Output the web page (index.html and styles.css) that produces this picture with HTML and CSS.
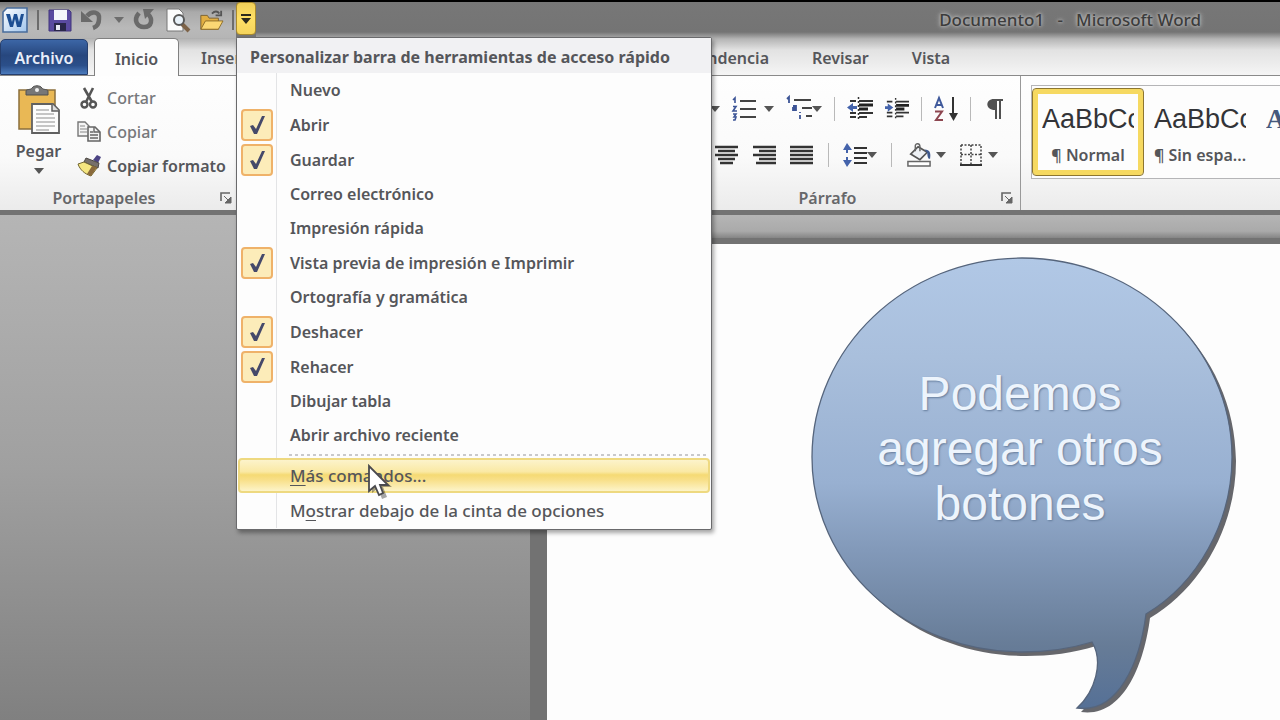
FILE: index.html
```html
<!DOCTYPE html>
<html lang="es">
<head>
<meta charset="utf-8">
<title>Documento1 - Microsoft Word</title>
<link rel="stylesheet" href="styles.css">
</head>
<body>
<header class="chrome">
  <div class="titlebar">
    <div class="quick">
      <svg class="logo" viewBox="0 0 26 26"><defs><linearGradient id="lg" x2="1" y2="1"><stop offset="0" stop-color="#fff"/><stop offset="1" stop-color="#9fc4ec"/></linearGradient></defs><path d="M5 1H25V25H1V5Z" fill="url(#lg)" stroke="#4a6d9c" stroke-width="1.6"/><path d="M4 7H8L10 15L12 7H15L17 15L19 7H22L19 20H15L13 12L11 20H8Z" fill="#1d4f93"/></svg>
      <span class="vsep"></span>
      <button class="qbtn" aria-label="Guardar"><svg viewBox="0 0 24 24"><path d="M1 2H21L23 4V23H1Z" fill="#5a4aa0" stroke="#41357c"/><path d="M6 2H19V12H6Z" fill="#f5f6fb"/><path d="M6 15H18V23H6Z" fill="#29264a"/><path d="M8 17h4v5H8z" fill="#e8e8f4"/></svg></button>
      <button class="qbtn" aria-label="Deshacer"><svg viewBox="0 0 24 24"><path d="M6 8C11 2 19 4 18 11C18 16 15 19 12 20" fill="none" stroke="#6a6a6a" stroke-width="4.500"/><path d="M0 3V14H12Z" fill="#6a6a6a"/></svg></button>
      <svg class="caret" viewBox="0 0 10 6"><path d="M0 0H10L5 6Z" fill="#6d6d6d"/></svg>
      <button class="qbtn" aria-label="Rehacer"><svg viewBox="0 0 24 24"><path d="M6 5C0 12 4 19 11 19C19 19 20 11 15 6" fill="none" stroke="#6a6a6a" stroke-width="4.500"/><path d="M10 1H21L12 11Z" fill="#6a6a6a"/></svg></button>
      <button class="qbtn" aria-label="Vista previa"><svg viewBox="0 0 24 24"><path d="M1 1H13L17 5V23H1Z" fill="#fbfbfb" stroke="#777"/><path d="M16 16L23 23" stroke="#7d6348" stroke-width="4"/><circle cx="13" cy="12" r="5" fill="#e8f1f8" stroke="#585858" stroke-width="2"/></svg></button>
      <button class="qbtn" aria-label="Abrir"><svg viewBox="0 0 26 24"><path d="M2 7H9L11 10H21V22H2Z" fill="#e1ae42" stroke="#7a602c"/><path d="M7 13H26L21 22H2Z" fill="#fbd774" stroke="#8b6a28"/><path d="M14 5C17 2 20 2 22 5M24 2V7H18" fill="none" stroke="#555" stroke-width="2"/></svg></button>
      <span class="vsep"></span>
      <div class="drop">
        <button class="drop-btn" aria-label="Personalizar" aria-expanded="true"><svg viewBox="0 0 12 10"><path d="M1 0H11V2H1ZM1 4H11L6 10Z" fill="#2c2a1c"/></svg></button>
        <div class="menu">
          <h2 class="menu-title">Personalizar barra de herramientas de acceso rápido</h2>
          <div class="menu-list">
            <label class="item"><span class="tick"><input type="checkbox"></span>Nuevo</label>
            <label class="item on"><span class="tick"><input type="checkbox" checked><svg viewBox="0 0 20 20"><path d="M3 11L6 10L9 14L15 1L18 1L10 19H7Z"/></svg></span>Abrir</label>
            <label class="item on"><span class="tick"><input type="checkbox" checked><svg viewBox="0 0 20 20"><path d="M3 11L6 10L9 14L15 1L18 1L10 19H7Z"/></svg></span>Guardar</label>
            <label class="item"><span class="tick"><input type="checkbox"></span>Correo electrónico</label>
            <label class="item"><span class="tick"><input type="checkbox"></span>Impresión rápida</label>
            <label class="item on"><span class="tick"><input type="checkbox" checked><svg viewBox="0 0 20 20"><path d="M3 11L6 10L9 14L15 1L18 1L10 19H7Z"/></svg></span>Vista previa de impresión e Imprimir</label>
            <label class="item"><span class="tick"><input type="checkbox"></span>Ortografía y gramática</label>
            <label class="item on"><span class="tick"><input type="checkbox" checked><svg viewBox="0 0 20 20"><path d="M3 11L6 10L9 14L15 1L18 1L10 19H7Z"/></svg></span>Deshacer</label>
            <label class="item on"><span class="tick"><input type="checkbox" checked><svg viewBox="0 0 20 20"><path d="M3 11L6 10L9 14L15 1L18 1L10 19H7Z"/></svg></span>Rehacer</label>
            <label class="item"><span class="tick"><input type="checkbox"></span>Dibujar tabla</label>
            <label class="item"><span class="tick"><input type="checkbox"></span>Abrir archivo reciente</label>
            <div class="menu-sep"></div>
            <button class="command hot"><u>M</u>ás comandos...</button>
            <button class="command">M<u>o</u>strar debajo de la cinta de opciones</button>
          </div>
          <svg class="cursor" viewBox="0 0 24 32"><path d="M4 3V27L10 22L14 33L19 31L15 21H24Z" fill="#000" opacity=".35"/><path d="M1 0V25L7 20L11 29L15 27L12 19H20Z" fill="#fff" stroke="#4a4a4e" stroke-width="1.800"/></svg>
        </div>
      </div>
    </div>
    <h1 class="doc-title">Documento1 &nbsp;&nbsp;-&nbsp;&nbsp; Microsoft Word</h1>
  </div>
  <nav class="tabs">
    <button class="tab file">Archivo</button>
    <button class="tab active">Inicio</button>
    <div class="tab-run">
      <button class="tab">Insertar</button>
      <button class="tab">Correspondencia</button>
    </div>
    <button class="tab">Revisar</button>
    <button class="tab">Vista</button>
  </nav>
</header>

<section class="ribbon">
  <div class="group clipboard">
    <div class="clip-body">
      <button class="paste">
        <svg class="paste-icon" viewBox="0 0 44 50"><path d="M2 5H38V44H2Z" fill="#e9b855" stroke="#8b6f3d" stroke-width="1.5"/><path d="M9 10V6C9 4 14 5 15 3C17 0 23 0 25 3C26 5 31 4 31 6V10Z" fill="#777" stroke="#505050"/><circle cx="20" cy="5" r="2" fill="#eee"/><path d="M15 19H36L42 25V48H15Z" fill="#fcfcfc" stroke="#606060" stroke-width="1.8"/><path d="M35 19V26H42" fill="#ddd" stroke="#606060" stroke-width="1.5"/><path d="M19 25H32M19 29H37M19 33H38M19 37H38M19 41H38M19 45H32" stroke="#b2b2b2" stroke-width="1.5"/></svg>
        <span>Pegar</span>
        <svg class="caret" viewBox="0 0 10 6"><path d="M0 0H10L5 6Z" fill="#555"/></svg>
      </button>
      <div class="clip-list">
        <button class="small dim"><svg viewBox="0 0 24 24"><path d="M7 2L15 16M16 2L9 16" stroke="#555" stroke-width="2.6"/><circle cx="7.500" cy="18.500" r="3" fill="none" stroke="#555" stroke-width="2.4"/><circle cx="16" cy="18.500" r="3" fill="none" stroke="#555" stroke-width="2.400"/></svg>Cortar</button>
        <button class="small dim"><svg viewBox="0 0 24 24"><path d="M1 2H8L12 6V16H1Z" fill="#f4f4f4" stroke="#777" stroke-width="1.4"/><path d="M3 6h5M3 9h7M3 12h7" stroke="#888"/><path d="M11 7H18L23 12V21H11Z" fill="#f4f4f4" stroke="#666" stroke-width="1.600"/><path d="M17 7V12H23M13 12h3M13 15h8M13 18h8" fill="none" stroke="#666" stroke-width="1.4"/></svg>Copiar</button>
        <button class="small"><svg viewBox="0 0 24 24"><path d="M16 6L20 1L24 3L21 9Z" fill="#4c4484"/><path d="M9 4L22 9L21 14L7 8Z" fill="#77706a" stroke="#4c4844"/><path d="M7 8L20 14L14 22C8 20 3 16 1 10Z" fill="#f5e680" stroke="#716532"/><path d="M20 13L14 22L10 20L15 12Z" fill="#8a6a3c"/></svg>Copiar formato</button>
      </div>
    </div>
    <div class="group-foot"><span class="group-name">Portapapeles</span><button class="launcher" aria-label="Portapapeles"><svg viewBox="0 0 12 12"><path d="M1 9V1H10" fill="none" stroke="#666" stroke-width="1.6"/><path d="M4 4L9 9M11 5V11H5Z" fill="#666" stroke="#666"/></svg></button></div>
  </div>
  <div class="group font-group"></div>
  <div class="group paragraph">
    <div class="para-body">
      <div class="row first">
        <button class="tool t4" aria-label="Viñetas"><svg class="i24" viewBox="0 0 24 24"><path d="M8 4H24M8 12H24M8 20H24" stroke="#444" stroke-width="2"/></svg><svg class="caret" viewBox="0 0 10 6"><path d="M0 0H10L5 6Z" fill="#555"/></svg></button>
        <button class="tool t8" aria-label="Numeración"><svg class="i24" viewBox="0 0 24 24"><path d="M8 4H24M8 12H24M8 20H24" stroke="#444" stroke-width="2"/><path d="M1 3L3 1V6M1 9.500H4L1 14H5M1 17H4L2 20H4L3 23H1" fill="none" stroke="#3c5496" stroke-width="1.600"/></svg><svg class="caret" viewBox="0 0 10 6"><path d="M0 0H10L5 6Z" fill="#555"/></svg></button>
        <button class="tool" aria-label="Lista multinivel"><svg class="i26" viewBox="0 0 26 24"><path d="M8 3H25M16 11H26M20 19H26" stroke="#444" stroke-width="2"/><path d="M1 2L3 0V6M7 9H10V13H7V11H10M14 18V22M14 15V16" fill="none" stroke="#3c5496" stroke-width="1.8"/></svg><svg class="caret" viewBox="0 0 10 6"><path d="M0 0H10L5 6Z" fill="#555"/></svg></button>
        <span class="rsep"></span>
        <button class="tool" aria-label="Reducir sangría"><svg class="i26" viewBox="0 0 26 24"><path d="M3 4H9M3 16H9M3 20H9M12 4H26M12 16H26M12 20H20" stroke="#333" stroke-width="2"/><path d="M12 8H26M12 12H21" stroke="#222" stroke-width="3"/><path d="M0 10.500L6 6V9H10V12H6V15Z" fill="#4463ab"/><path d="M11.500 0V24" stroke="#333" stroke-width="1.500" stroke-dasharray="2 2"/></svg></button>
        <button class="tool" aria-label="Aumentar sangría"><svg class="i24" viewBox="0 0 26 24"><path d="M2 4H8M2 16H8M2 20H8M12 4H26M12 16H26M12 20H20" stroke="#333" stroke-width="2"/><path d="M12 8H26M12 12H21" stroke="#222" stroke-width="3"/><path d="M9 10.500L3 6V9H0V12H3V15Z" fill="#4463ab"/><path d="M11.500 0V24" stroke="#333" stroke-width="1.500" stroke-dasharray="2 2"/></svg></button>
        <span class="rsep"></span>
        <button class="tool" aria-label="Ordenar"><svg class="i24" viewBox="0 0 24 24"><path d="M1 11L5 1L9 11M2.500 8H8" fill="none" stroke="#405a9c" stroke-width="2"/><path d="M1 14.500H8L2 23H9" fill="none" stroke="#8d4650" stroke-width="2"/><path d="M19 0V19" stroke="#333" stroke-width="2"/><path d="M15 16H24L19.500 24Z" fill="#333"/></svg></button>
        <span class="rsep"></span>
        <button class="tool pilcrow" aria-label="Mostrar todo"><svg class="i16" viewBox="0 0 16 20"><path d="M7 0H16V2H14V20H12V2H10V20H8V11C-2 11-2 0 7 0Z" fill="#505050"/></svg></button>
      </div>
      <div class="row second">
        <button class="tool" aria-label="Alinear a la izquierda"><svg class="i24" viewBox="0 0 24 20"><path d="M0 2H24M0 6H16M0 10H24M0 14H16M0 18H24" stroke="#333" stroke-width="2"/></svg></button>
        <button class="tool" aria-label="Centrar"><svg class="i24" viewBox="0 0 24 20"><path d="M1 2H24M4 6H21M1 10H24M4 14H21M6 18H19" stroke="#333" stroke-width="2.400"/></svg></button>
        <button class="tool" aria-label="Alinear a la derecha"><svg class="i24" viewBox="0 0 24 20"><path d="M1 2H24M7 6H24M1 10H24M7 14H24M4 18H24" stroke="#333" stroke-width="2.400"/></svg></button>
        <button class="tool" aria-label="Justificar"><svg class="i24" viewBox="0 0 24 20"><path d="M0 2H23M0 6H23M0 10H23M0 14H23M0 18H23" stroke="#333" stroke-width="2.600"/></svg></button>
        <span class="rsep"></span>
        <button class="tool" aria-label="Interlineado"><svg class="i24" viewBox="0 0 24 24"><path d="M11 5H24M11 10H24M11 15H24M11 20H24" stroke="#333" stroke-width="2"/><path d="M4 4V20" stroke="#4463ab" stroke-width="2" stroke-dasharray="6 4"/><path d="M0 7L4 0L9 7ZM0 17H9L4 24Z" fill="#4463ab"/></svg><svg class="caret" viewBox="0 0 10 6"><path d="M0 0H10L5 6Z" fill="#555"/></svg></button>
        <span class="rsep"></span>
        <button class="tool t4" aria-label="Sombreado"><svg class="i26" viewBox="0 0 26 26"><path d="M1 20H25V25H1Z" fill="#fff" stroke="#666" stroke-width="1.600"/><path d="M12 4L22 10L14 18L4 12Z" fill="#eef1f5" stroke="#555" stroke-width="1.800"/><path d="M9 9V3C9 0 14 0 14 4V9" fill="none" stroke="#666" stroke-width="1.600"/><path d="M19 7C25 7 26 11 25 17C23 18 22 14 22 11Z" fill="#3f598d"/></svg><svg class="caret" viewBox="0 0 10 6"><path d="M0 0H10L5 6Z" fill="#555"/></svg></button>
        <button class="tool t6" aria-label="Bordes"><svg class="i22" viewBox="0 0 22 22"><path d="M1 1H21V20M1 1V20M11 1V20M1 10.500H21" fill="none" stroke="#444" stroke-width="1.500" stroke-dasharray="2 1.500"/><path d="M0 21H22" stroke="#333" stroke-width="2"/></svg><svg class="caret" viewBox="0 0 10 6"><path d="M0 0H10L5 6Z" fill="#555"/></svg></button>
      </div>
    </div>
    <div class="group-foot"><span class="group-name">Párrafo</span><button class="launcher" aria-label="Párrafo"><svg viewBox="0 0 12 12"><path d="M1 9V1H10" fill="none" stroke="#666" stroke-width="1.6"/><path d="M4 4L9 9M11 5V11H5Z" fill="#666" stroke="#666"/></svg></button></div>
  </div>
  <div class="group styles">
    <div class="gallery">
      <button class="style chosen"><span class="sample">AaBbCc</span><span class="style-name">¶ Normal</span></button>
      <button class="style"><span class="sample">AaBbCc</span><span class="style-name">¶ Sin espa...</span></button>
      <button class="style title"><span class="sample">AaBb</span></button>
    </div>
  </div>
</section>

<main class="workspace">
  <div class="gutter"></div>
  <div class="canvas">
    <div class="ruler"></div>
    <article class="page">
      <aside class="callout">
        <svg class="bubble" viewBox="0 0 428 460"><defs><linearGradient id="bg" x1="0" y1="0" x2="0" y2="1"><stop offset="0" stop-color="#b1c8e6"/><stop offset=".22" stop-color="#a9bfdc"/><stop offset=".5" stop-color="#98b0d1"/><stop offset=".65" stop-color="#8299b9"/><stop offset=".86" stop-color="#677c97"/><stop offset="1" stop-color="#557096"/></linearGradient></defs>
          <path transform="translate(4 4)" d="M281 385C258 392 235 395 211 395C95 395 1 309 1 200C1 91 95 1 211 1C327 1 421 91 421 200C421 265 387 326 335 357C329 404 308 457 266 451C284 435 293 405 281 385Z" fill="#66676c"/>
          <path d="M281 385C258 392 235 395 211 395C95 395 1 309 1 200C1 91 95 1 211 1C327 1 421 91 421 200C421 265 387 326 335 357C329 404 308 457 266 451C284 435 293 405 281 385Z" fill="url(#bg)" stroke="#56657c" stroke-width="1.300"/></svg>
        <p class="callout-text">Podemos agregar otros botones</p>
      </aside>
    </article>
  </div>
</main>
</body>
</html>
```
FILE: styles.css
```css
* { box-sizing: border-box; }
body {
  margin: 0;
  min-height: 100vh;
  display: flex;
  flex-direction: column;
  overflow: hidden;
  font: 600 16px/24px "Noto Sans", "Open Sans", sans-serif;
  color: #55565a;
  background: #fdfdfd;
}
button { margin: 0; padding: 0; border: 0; background: none; font: inherit; color: inherit; }
svg { display: block; flex: none; overflow: visible; }
h1, h2, p { margin: 0; font: inherit; }

.chrome {
  border-top: 2px solid #000;
  background: linear-gradient(#777 0, #747474 30px, #b5b5b5 37px, #e2e2e2 48px, #f6f6f6 74px);
}
.titlebar { display: flex; height: 36px; }
.quick {
  display: flex;
  align-items: center;
  gap: 9px;
  padding-left: 2px;
  background: linear-gradient(#777, #aaa 10px, #b9b9b9 26px, #b5b5b5);
}
.logo { width: 26px; height: 26px; }
.vsep { width: 2px; height: 20px; background: #6c6c6c; }
.vsep + .drop { margin-left: -7px; }
.qbtn svg { width: 24px; height: 24px; }
.caret { width: 10px; height: 6px; }
.drop { position: relative; align-self: stretch; background: #757575; }
.drop-btn {
  display: flex;
  justify-content: center;
  align-items: center;
  width: 20px;
  height: 33px;
  border: 1px solid #a98a2c;
  border-radius: 4px;
  background: linear-gradient(#f0cf58, #ffe066 50%, #f5d45c);
}
.drop-btn svg { width: 12px; height: 10px; }
.doc-title {
  flex: 1;
  padding: 6px 79px 0 0;
  text-align: right;
  font-size: 17px;
  font-weight: 500;
  color: #3c3c3c;
  text-shadow: 0 0 3px #bbb, 0 0 4px #aaa, 0 0 6px #aaa;
}

.tabs { display: flex; align-items: flex-end; height: 38px; border-bottom: 1px solid #8a8a8a; }
.tab { height: 36px; padding-top: 2px; }
.tab.file {
  width: 88px;
  border: 1px solid #263f6e;
  border-radius: 5px 5px 0 0;
  background: linear-gradient(#3c66a6, #27477e 45%, #2b4f8a 75%, #4b7bbd);
  color: #e8eefa;
}
.tab.active {
  width: 85px;
  height: 38px;
  margin: 0 0 -1px 6px;
  border: 1px solid #808080;
  border-bottom: 0;
  border-radius: 5px 5px 0 0;
  background: #fdfdfd;
}
.tab-run { display: flex; justify-content: space-between; width: 568px; margin-left: 22px; }
.tab-run ~ .tab { margin-left: 43px; }

.menu {
  position: absolute;
  z-index: 5;
  top: 35px;
  left: 0;
  width: 476px;
  padding-bottom: 1px;
  border: 1px solid #6a6a6c;
  border-radius: 2px;
  background: #fdfdfd;
  box-shadow: 2px 3px 4px rgba(0, 0, 0, .35);
}
.menu-title { height: 35px; padding: 7px 13px; background: #f1f1f3; font-weight: 700; white-space: nowrap; }
.menu-list { background: linear-gradient(90deg, transparent 39px, #e3e4e6 39px, #e3e4e6 40px, transparent 40px); }
.item { display: flex; align-items: center; gap: 17px; height: 34px; padding-left: 4px; }
.item.on { height: 35px; }
.tick { display: grid; place-items: center; width: 32px; height: 32px; }
.tick > * { grid-area: 1 / 1; }
.tick input { appearance: none; width: 32px; height: 32px; margin: 0; border-radius: 4px; }
.tick input:checked { border: 2px solid #efb269; background: #fcecb9; }
.tick svg { width: 20px; height: 20px; fill: #45496a; }
.menu-sep { height: 6px; margin: 0 4px 0 52px; background: repeating-linear-gradient(90deg, #c9c9cb 0 3px, transparent 3px 6px) 0 2px / 100% 2px no-repeat; }
.command {
  display: block;
  width: calc(100% - 2px);
  height: 35px;
  margin-left: 1px;
  padding-left: 50px;
  border: 2px solid transparent;
  border-radius: 4px;
  font-size: 17px;
  font-weight: 500;
  text-align: left;
}
.command.hot {
  border-color: #eed980;
  background: linear-gradient(#fcf3cb, #fae9a4 38%, #f5da74 48%, #f8e08a 65%, #fdf4c9);
}
.command u { text-underline-offset: 3px; }
.cursor { position: absolute; left: 131px; top: 428px; width: 24px; height: 32px; }

.ribbon {
  display: flex;
  height: 139px;
  border-bottom: 5px solid #737373;
  background: linear-gradient(#fefefe, #fafafa 60%, #ebebeb);
}
.group { display: flex; flex-direction: column; border-right: 1px solid #999; }
.group-foot { display: flex; align-items: center; height: 24px; padding-right: 4px; color: #66676a; }
.group-name { flex: 1; text-align: center; }
.launcher svg { width: 12px; height: 12px; }
.clipboard { width: 237px; }
.clipboard .group-name { padding-right: 12px; }
.clip-body { display: flex; flex: 1; }
.paste { display: flex; flex-direction: column; align-items: center; width: 77px; padding-top: 9px; }
.paste-icon { width: 44px; height: 50px; }
.paste .caret { margin-top: 5px; }
.paste span { margin-top: 4px; }
.clip-list { padding-top: 5px; }
.small { display: flex; align-items: center; gap: 6px; height: 34px; white-space: nowrap; }
.small svg { width: 24px; height: 24px; }
.dim { color: #77787b; font-weight: 500; }
.font-group { flex: 1; }
.paragraph { width: 387px; }
.para-body { flex: 1; }
.row { display: flex; align-items: center; }
.first { gap: 12px; height: 66px; padding-left: 48px; }
.second { gap: 14px; height: 26px; padding-left: 42px; }
.tool { display: flex; align-items: center; }
.t4 { gap: 4px; }
.t6 { gap: 6px; }
.t8 { gap: 8px; }
.i16 { width: 16px; height: 20px; }
.i22 { width: 22px; height: 22px; }
.i24 { width: 24px; height: 24px; }
.i26 { width: 26px; height: 24px; }
.pilcrow { width: 24px; justify-content: center; }
.rsep { width: 1px; height: 24px; background: #b9b9b9; }
.paragraph .group-foot { padding: 0 7px 0 20px; }
.styles { width: 259px; padding: 9px 0 0 10px; border-right: 0; }
.gallery { display: flex; overflow: hidden; height: 94px; padding-top: 2px; border: 1px solid #b5b5b7; border-right: 0; background: #fdfdfd; }
.style { display: flex; flex: none; flex-direction: column; align-items: center; width: 112px; height: 88px; padding-top: 14px; border: 1px solid transparent; white-space: nowrap; }
.chosen { border-color: #8d7630; border-radius: 4px; box-shadow: inset 0 0 0 5px #f6d961; }
.sample { width: 92px; overflow: hidden; font: 400 27px/32px "Liberation Sans", Arial, sans-serif; color: #333438; text-align: left; white-space: nowrap; }
.style-name { margin-top: 8px; }
.title .sample { color: #46597c; font-family: "Liberation Serif", serif; font-weight: 700; }

.workspace { display: flex; flex: 1; background: #8a8a8a; }
.gutter {
  width: 547px;
  border-right: 17px solid #727272;
  background: linear-gradient(#b5b5b5, #a0a0a0 50%, #808080);
}
.canvas { display: flex; flex: 1; flex-direction: column; }
.ruler { height: 29px; border-bottom: 6px solid #737373; background: linear-gradient(#b5b5b5, #aaa 70%, #858585); }
.page { position: relative; flex: 1; background: #fdfdfd; }
.callout { position: absolute; top: 13px; right: 41px; width: 428px; height: 460px; }
.bubble { width: 428px; height: 460px; }
.callout-text {
  position: absolute;
  top: 109px;
  left: 56px;
  width: 306px;
  text-align: center;
  font: 400 48px/55px "Liberation Sans", Arial, sans-serif;
  color: #edf4fc;
  text-shadow: 1px 1px 2px #667d9c;
}
```
